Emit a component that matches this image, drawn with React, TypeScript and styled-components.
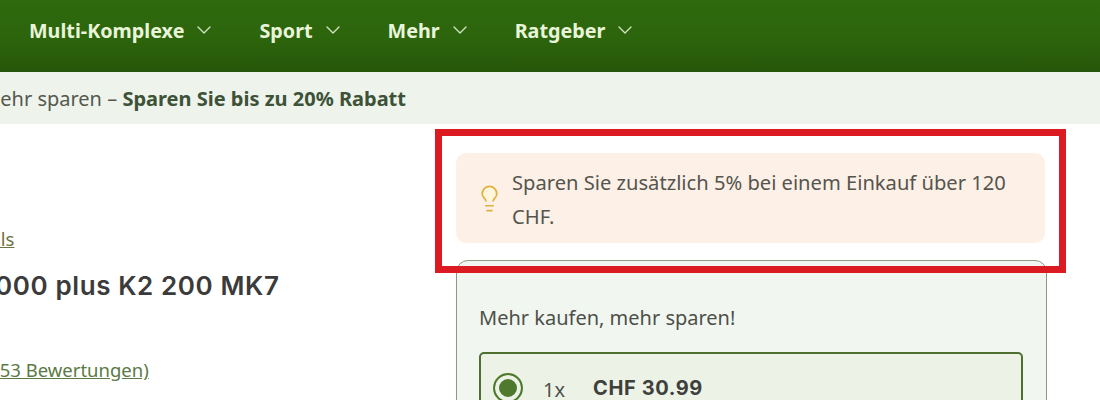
import React from "react";
import styled, { createGlobalStyle } from "styled-components";
import { ChevronDown, Lightbulb } from "lucide-react";

const GlobalStyle = createGlobalStyle`
    html, body {
        margin: 0;
        padding: 0;
        background: #ffffff;
        overflow: hidden;
    }
    body {
        font-family: "Noto Sans", "Open Sans", sans-serif;
        color: #4a4a45;
    }
`;

const menu = ["Multi-Komplexe", "Sport", "Mehr", "Ratgeber"];

export default function App() {
    return (
        <Page>
            <GlobalStyle />
            <Nav>
                {menu.map((item) => (
                    <NavItem key={item}>
                        {item}
                        <ChevronDown size={24} strokeWidth={1.4} color="#cfe3bd" />
                    </NavItem>
                ))}
            </Nav>
            <Promo>
                Mehr kaufen, mehr sparen – <strong>Sparen Sie bis zu 20% Rabatt</strong>
            </Promo>
            <Content>
                <Product>
                    <BrandLink>Details</BrandLink>
                    <Title>Vitamin D3 5000 plus K2 200 MK7</Title>
                    <Reviews>(1253 Bewertungen)</Reviews>
                </Product>
                <Buy>
                    <Alert>
                        <BulbIcon>
                            <Lightbulb size={29} strokeWidth={1.4} color="#e0b03c" fill="#fff6df" />
                        </BulbIcon>
                        <AlertText>Sparen Sie zusätzlich 5% bei einem Einkauf über 120 CHF.</AlertText>
                    </Alert>
                    <Panel>
                        <PanelTitle>Mehr kaufen, mehr sparen!</PanelTitle>
                        <Option>
                            <Radio />
                            <Qty>1x</Qty>
                            <Price>CHF 30.99</Price>
                        </Option>
                    </Panel>
                    <Highlight />
                </Buy>
            </Content>
        </Page>
    );
}

const Page = styled.div`
    width: 1100px;
    height: 400px;
    overflow: hidden;
    display: flex;
    flex-direction: column;
`;

const Nav = styled.nav`
    height: 72px;
    flex-shrink: 0;
    display: flex;
    align-items: center;
    gap: 43px;
    padding: 0 0 12px 29px;
    box-sizing: border-box;
    background: linear-gradient(180deg, #2f6a0e 0%, #2c640c 55%, #265609 100%);
`;

const NavItem = styled.div`
    display: flex;
    align-items: center;
    gap: 8px;
    font-size: 19.75px;
    font-weight: 700;
    color: #e9f5d9;
`;

const Promo = styled.div`
    height: 52px;
    flex-shrink: 0;
    box-sizing: border-box;
    margin-left: -149px;
    padding-top: 2px;
    background: #eef3ec;
    font-size: 20px;
    line-height: 50px;
    color: #55584f;
    white-space: pre;

    strong {
        font-weight: 700;
        color: #3d5237;
    }
`;

const Content = styled.main`
    flex: 1;
    display: flex;
    min-height: 0;
`;

const Product = styled.section`
    width: 456px;
    flex-shrink: 0;
    box-sizing: border-box;
    padding-top: 101px;
    white-space: nowrap;
`;

const BrandLink = styled.div`
    margin-left: -45px;
    font-size: 18.5px;
    line-height: 28px;
    color: #6e7440;
    text-decoration: underline;
`;

const Title = styled.h1`
    margin: 17px 0 0 -173px;
    font-family: "Inter", sans-serif;
    font-size: 26px;
    line-height: 32px;
    font-weight: 600;
    letter-spacing: 0.6px;
    color: #3b3b3b;
`;

const Reviews = styled.div`
    margin: 54px 0 0 -27px;
    font-size: 18.5px;
    line-height: 28px;
    color: #5b7a45;
    text-decoration: underline;
`;

const Buy = styled.section`
    position: relative;
    width: 591px;
    padding-top: 29px;
`;

const Alert = styled.div`
    width: 589px;
    height: 90px;
    box-sizing: border-box;
    display: flex;
    align-items: center;
    gap: 8px;
    padding: 0 30px 0 19px;
    border-radius: 10px;
    background: #fdf0e6;
`;

const BulbIcon = styled.span`
    display: flex;
    flex-shrink: 0;
`;

const AlertText = styled.p`
    margin: 2px 0 0;
    font-size: 20.15px;
    line-height: 34px;
    color: #55554f;
`;

const Panel = styled.div`
    margin-top: 17px;
    height: 200px;
    box-sizing: border-box;
    padding: 41px 23px 0 22px;
    border: 1px solid #8b9a80;
    border-radius: 12px;
    background: #f1f7f0;
`;

const PanelTitle = styled.div`
    font-size: 20px;
    line-height: 32px;
    color: #4e4f49;
`;

const Option = styled.div`
    margin-top: 18px;
    height: 80px;
    box-sizing: border-box;
    display: flex;
    align-items: flex-start;
    padding: 19px 0 0 12px;
    border: 2px solid #4f6f30;
    border-radius: 5px;
    background: #ecf3e6;
`;

const Radio = styled.span`
    width: 30px;
    height: 30px;
    flex-shrink: 0;
    box-sizing: border-box;
    border: 2px solid #4f7a2d;
    border-radius: 50%;
    background: #4f7a2d;
    box-shadow: inset 0 0 0 4px #ecf3e6;
`;

const Qty = styled.span`
    margin-left: 20px;
    font-size: 20px;
    line-height: 34px;
    color: #4e4f49;
`;

const Price = styled.span`
    margin-left: 28px;
    font-family: "Inter", sans-serif;
    font-size: 20px;
    line-height: 30px;
    font-weight: 700;
    letter-spacing: 0.6px;
    color: #3f403c;
`;

/* annotation frame drawn over the screenshot */
const Highlight = styled.div`
    position: absolute;
    left: -21px;
    top: 5px;
    width: 631px;
    height: 144px;
    box-sizing: border-box;
    border: 7px solid #db1a22;
`;
